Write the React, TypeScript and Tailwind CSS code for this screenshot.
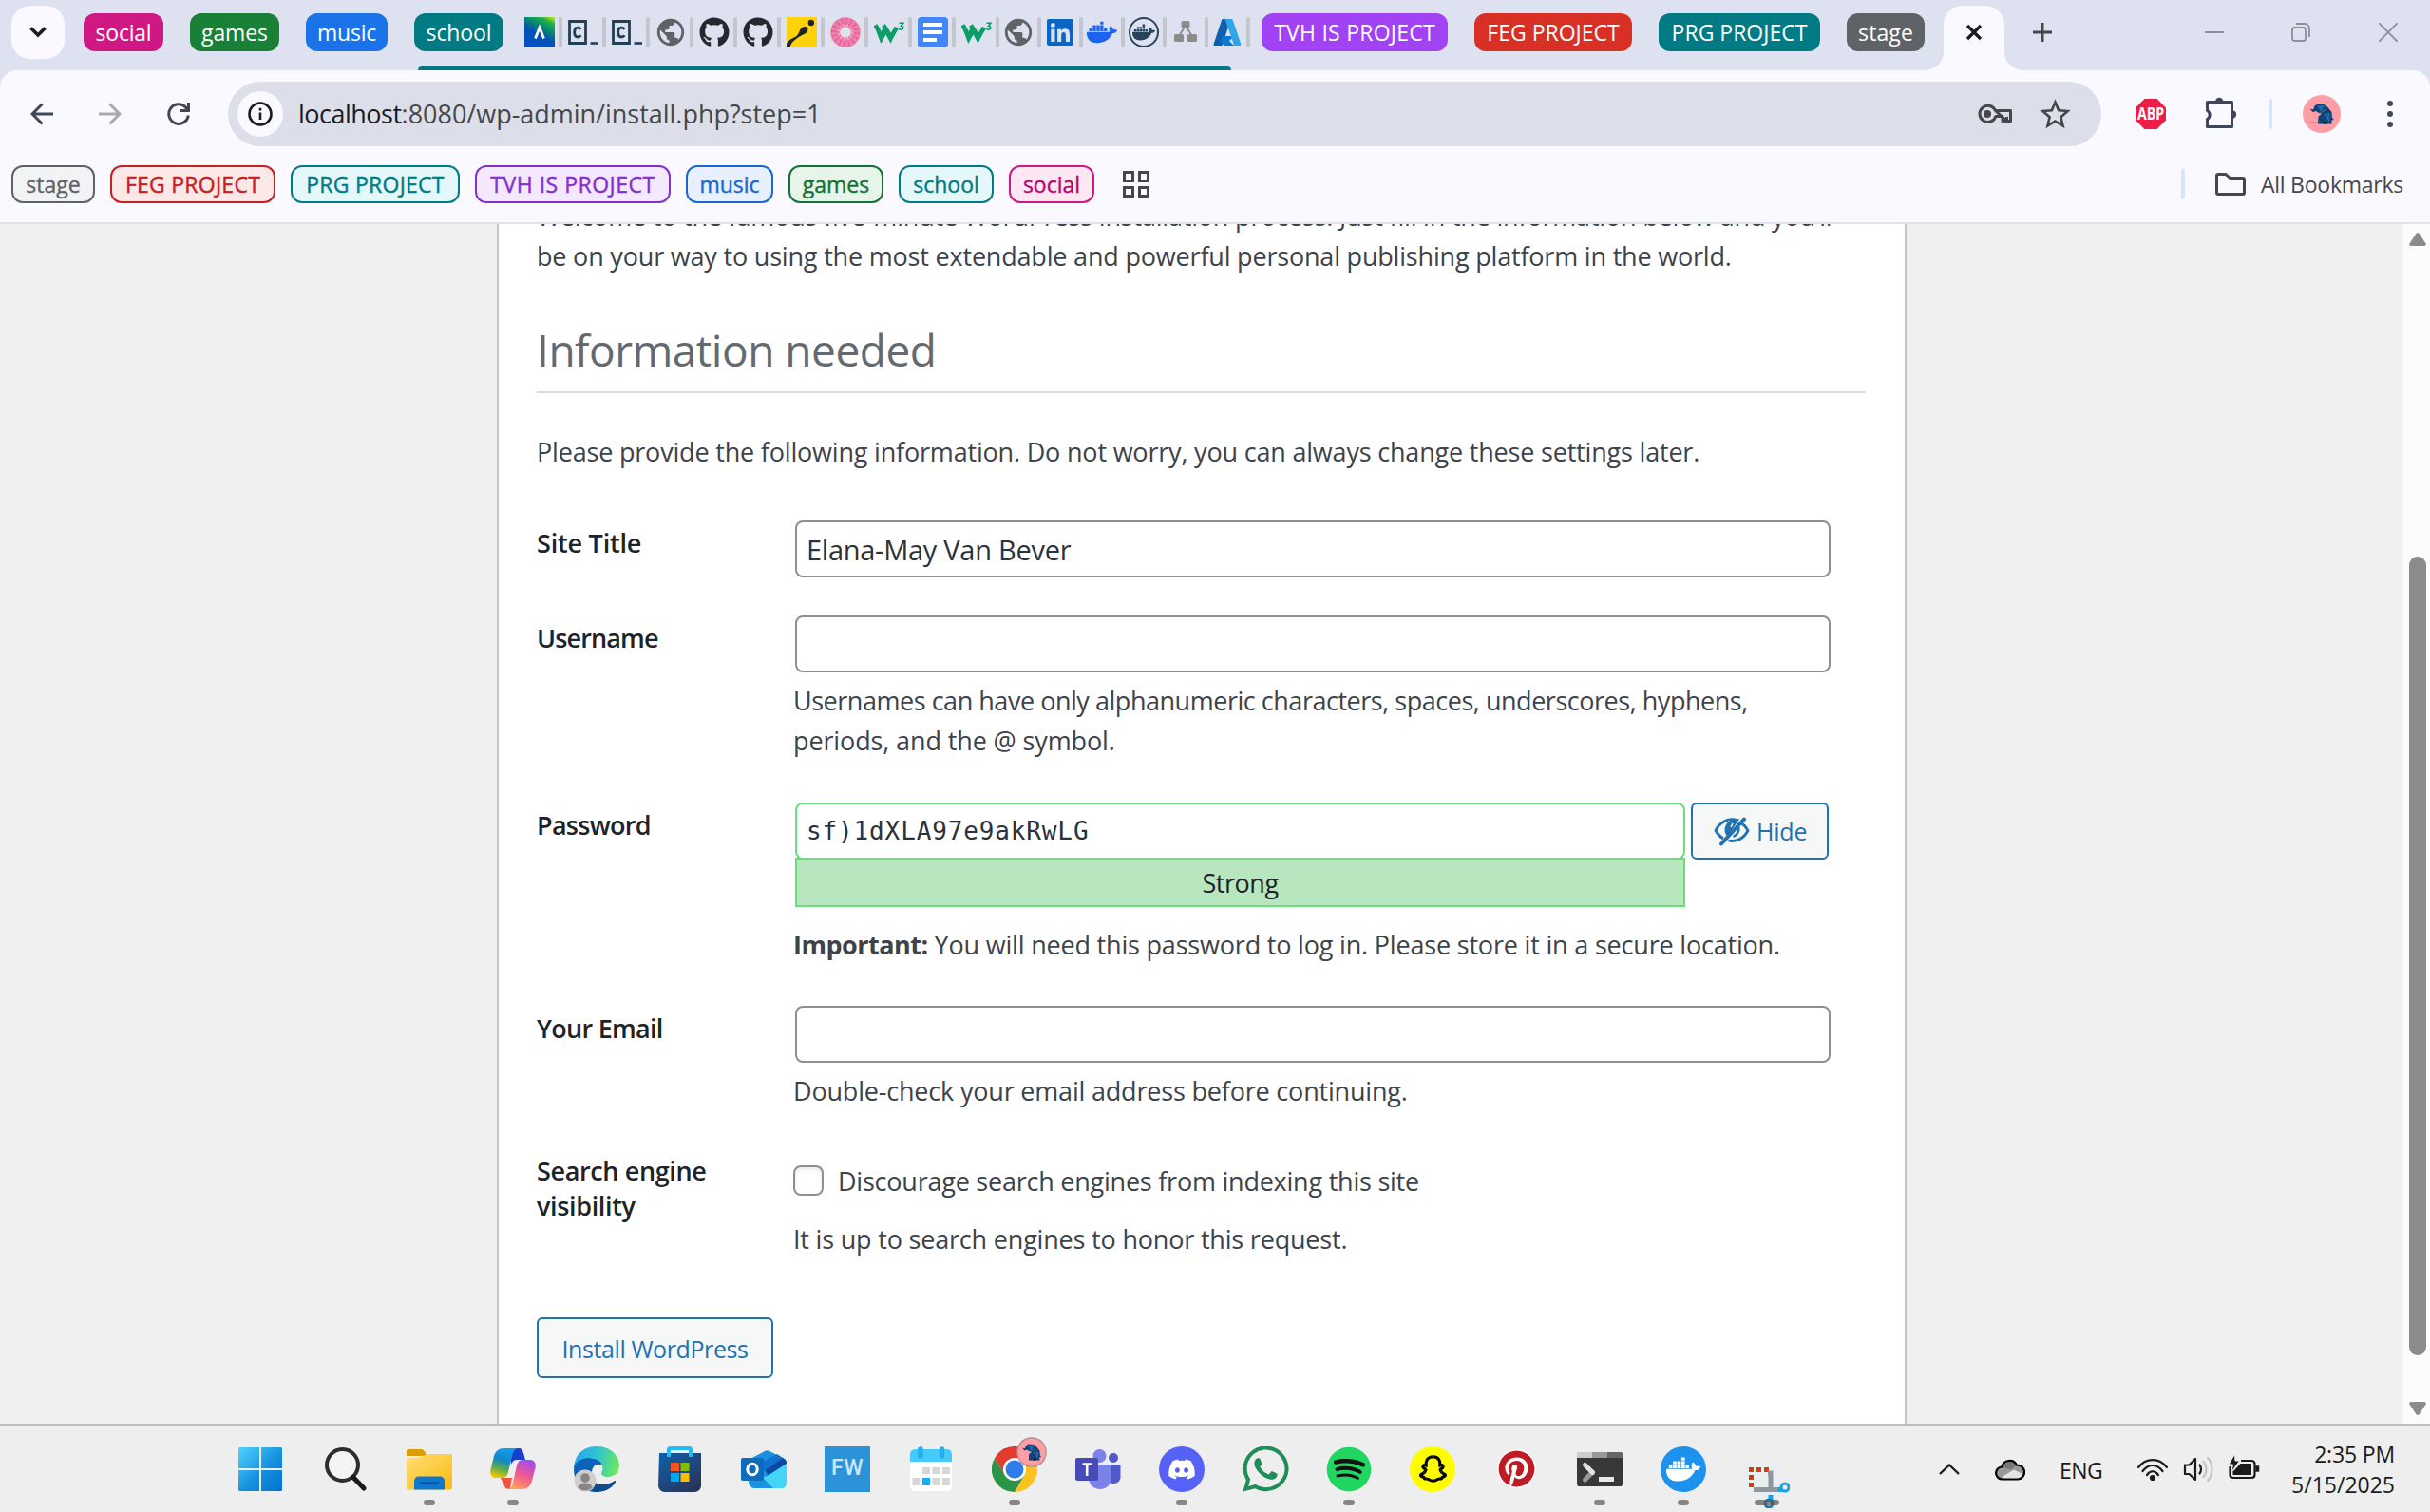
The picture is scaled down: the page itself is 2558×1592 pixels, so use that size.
import type { ReactNode } from 'react';
import { FaDiscord, FaDocker, FaGithub, FaLinkedin, FaPinterest, FaSnapchat, FaSpotify, FaWhatsapp } from 'react-icons/fa6';
import { MdPublic, MdStarBorder } from 'react-icons/md';

/* ---------- tab strip ---------- */

function AcademyIcon() {
  return (
    <svg viewBox="0 0 32 32" className="size-8">
      <defs>
        <linearGradient id="academy" x1="1" y1="0" x2="0.45" y2="1">
          <stop offset="0" stopColor="#d4f000" />
          <stop offset="0.2" stopColor="#22b24c" />
          <stop offset="0.42" stopColor="#078a6c" />
          <stop offset="0.65" stopColor="#0552b5" />
          <stop offset="1" stopColor="#0350c4" />
        </linearGradient>
      </defs>
      <rect width="32" height="32" fill="url(#academy)" />
      <path d="M11.5 22.5 16 11l4.500 11.500" fill="none" stroke="#fff" strokeWidth="2.800" />
    </svg>
  );
}

function CodecademyIcon() {
  return (
    <svg viewBox="0 0 32 32" className="size-8" fill="none" stroke="#204056">
      <path d="M1.500 4.500h17v23h-17z" strokeWidth="2.800" />
      <path d="M13.500 12.800c-1-1.300-2-1.600-3.400-1.600-2.400 0-3.400 1.900-3.400 4.900s1 4.900 3.400 4.900c1.400 0 2.400-.4 3.400-1.600" strokeWidth="2.800" />
      <path d="M23.500 27.500h8.500" strokeWidth="2.600" />
    </svg>
  );
}

function YellowIcon() {
  return (
    <svg viewBox="0 0 32 32" className="size-8">
      <rect width="32" height="32" fill="#ffd20a" />
      <circle cx="25.800" cy="6" r="3.200" fill="#222" />
      <path d="M0 32v-2c0-4 3-6 7-8 4-1.800 5-3 6.500-7 1.300-3.600 4-6 7-4.700 3.200 1.500 2.300 5.500-1 7.200-3.500 1.800-6.500 3-10 6C6 26 4.500 28 3.500 32z" fill="#222" />
    </svg>
  );
}

function PinkRingIcon() {
  return (
    <svg viewBox="0 0 32 32" className="size-8" fill="none">
      <circle cx="16" cy="16" r="10.800" stroke="#ee81ab" strokeWidth="10" />
      <circle cx="16" cy="16" r="11" stroke="#e8669c" strokeWidth="8" strokeDasharray="2 2.300" />
      <circle cx="16" cy="16" r="7.500" stroke="#f4a9c6" strokeWidth="2" strokeDasharray="2 2" />
    </svg>
  );
}

function W3Icon() {
  return (
    <svg viewBox="0 0 32 32" className="size-8" fill="none" stroke="#0a9d68">
      <path d="M1.500 8.200 8 20.500l3.500-8" strokeWidth="4.600" />
      <path d="M10 8.500 18 21l6-10" strokeWidth="4.600" />
      <path d="M3.500 14 7.500 25l5-9 5 9 6-13" strokeWidth="2.500" />
      <path d="M26.500 6.200h4.500l-2.500 3c3 0 3.300 4-.2 4-.9 0-1.500-.3-2-.8" strokeWidth="1.500" />
    </svg>
  );
}

function DocsIcon() {
  return (
    <svg viewBox="0 0 32 32" className="size-8">
      <rect width="32" height="32" rx="4" fill="#4386fa" />
      <path d="M6 8h20M6 16h20M6 24h14" stroke="#fff" strokeWidth="4" />
    </svg>
  );
}

function NetworkIcon() {
  return (
    <svg viewBox="0 0 32 32" className="size-8" fill="#8c8c8c">
      <rect x="11.500" y="4" width="9" height="7" rx="1.500" />
      <rect x="4" y="18" width="10" height="8" rx="1.500" />
      <rect x="18" y="18" width="10" height="8" rx="1.500" />
      <path d="m16 9-7 11M16 9l7 11" stroke="#8c8c8c" strokeWidth="1.800" />
    </svg>
  );
}

function AzureIcon() {
  return (
    <svg viewBox="0 0 32 32" className="size-8">
      <path d="M11.500 2h8.300L10.500 30H2.800c-1 0-1.500-.9-1.200-1.800L10 3.200C10.200 2.500 10.800 2 11.500 2z" fill="#0f5fae" />
      <path d="M10.500 20h13.200L18 25l5 5H13l-4-3z" fill="#0878d0" />
      <path d="M12.500 2h7.700c.8 0 1.400.5 1.600 1.200l8.500 25c.3.900-.2 1.800-1.200 1.800h-7.700c1 0 1.500-.9 1.200-1.800L14 3.200C13.800 2.500 13.200 2 12.500 2z" fill="#32a5e8" />
    </svg>
  );
}

function GlobeIcon() {
  return (
    <div className="flex size-8 items-center justify-center">
      <MdPublic className="size-[34px] shrink-0 text-[#5f6368]" />
    </div>
  );
}

const tabIcons: { icon: ReactNode; tight?: boolean }[] = [
  { icon: <AcademyIcon /> },
  { icon: <CodecademyIcon /> },
  { icon: <CodecademyIcon /> },
  { icon: <GlobeIcon /> },
  { icon: <FaGithub className="size-8 text-[#24292f]" /> },
  { icon: <FaGithub className="size-8 text-[#24292f]" /> },
  { icon: <YellowIcon /> },
  { icon: <PinkRingIcon /> },
  { icon: <W3Icon /> },
  { icon: <DocsIcon /> },
  { icon: <W3Icon />, tight: true },
  { icon: <GlobeIcon />, tight: true },
  { icon: <FaLinkedin className="size-8 text-[#0a66c2]" />, tight: true },
  { icon: <FaDocker className="size-8 text-[#1d63ed]" />, tight: true },
  {
    icon: (
      <div className="flex size-8 items-center justify-center rounded-full border-2 border-[#27445c]">
        <FaDocker className="size-6 text-[#27445c]" />
      </div>
    ),
    tight: true,
  },
  { icon: <NetworkIcon />, tight: true },
  { icon: <AzureIcon />, tight: true },
];

function TabGroup({ label, className }: { label: string; className: string }) {
  return (
    <div className={`flex h-10 shrink-0 items-center justify-center rounded-[12px] text-[23px] whitespace-nowrap text-white ${className}`}>
      <span>{label}</span>
    </div>
  );
}

function TabStrip() {
  return (
    <div className="relative flex h-[74px] shrink-0 bg-[#dee1f0]">
      <div className="flex h-[68px] items-center">
        <div className="ml-3 flex h-14 w-14 items-center justify-center rounded-[20px] bg-[#fbf9ff]">
          <svg viewBox="0 0 20 14" className="h-[14px] w-5" fill="none" stroke="#1b1b1f" strokeWidth="3.600">
            <path d="m2.500 2.500 7.500 7.500 7.500-7.500" />
          </svg>
        </div>
        <TabGroup label="social" className="ml-5 w-[84px] bg-[#d01884] tracking-[-0.22px]" />
        <TabGroup label="games" className="ml-7 w-[94px] bg-[#1a8038] tracking-[-0.1px]" />
        <TabGroup label="music" className="ml-7 w-[86px] bg-[#1a73e8] tracking-[-0.25px]" />
        <TabGroup label="school" className="ml-7 w-[94px] bg-[#007b83] tracking-[-0.1px]" />
        <div className="ml-[22px] flex">
          {tabIcons.map(({ icon, tight }, i) => (
            <div key={i} className={`flex h-8 items-center ${tight ? 'w-11' : 'w-[46px]'}`}>
              {icon}
              <div className="ml-1 h-8 w-1 rounded-sm bg-[#c4c6cf]" />
            </div>
          ))}
        </div>
        <TabGroup label="TVH IS PROJECT" className="ml-2 w-[196px] bg-[#a142f4] tracking-[0.24px]" />
        <TabGroup label="FEG PROJECT" className="ml-7 w-[166px] bg-[#d93025]" />
        <TabGroup label="PRG PROJECT" className="ml-7 w-[170px] bg-[#007b83]" />
        <TabGroup label="stage" className="ml-7 w-[82px] bg-[#5f6368] tracking-[0.1px]" />
      </div>
      <svg viewBox="0 0 108 68" className="mt-1.5 h-[68px] w-[108px] shrink-0">
        <path d="M0 68c12-.5 20-9 20-20V20C20 9 29 0 40 0h24c11 0 20 9 20 20v28c0 11 9 20 20 20z" fill="#f9f9ff" />
        <path d="m45 21 14 14M59 21 45 35" stroke="#1b1b1f" strokeWidth="3.200" />
      </svg>
      <svg viewBox="0 0 20 20" className="mt-6 ml-[6px] size-5 shrink-0" stroke="#47474a" strokeWidth="3">
        <path d="M10 0v20M0 10h20" />
      </svg>
      <div className="flex h-[68px] grow items-center justify-end pr-[34px] text-[#8d8f99]">
        <svg viewBox="0 0 20 20" className="size-5" stroke="currentColor" strokeWidth="2">
          <path d="M0 10h20" />
        </svg>
        <svg viewBox="0 0 20 20" className="ml-[71px] size-5" fill="none" stroke="currentColor" strokeWidth="1.800">
          <rect x="1" y="5" width="14" height="14" rx="2.500" />
          <path d="M5 1h9a5 5 0 0 1 5 5v9" />
        </svg>
        <svg viewBox="0 0 20 20" className="ml-[72px] size-5" stroke="currentColor" strokeWidth="1.800">
          <path d="m0 0 20 20M20 0 0 20" />
        </svg>
      </div>
      <div className="absolute bottom-0 left-[440px] h-1 w-[856px] rounded-t-sm bg-[#007b83]" />
    </div>
  );
}

/* ---------- toolbar ---------- */

function ElephantShape() {
  return (
    <>
      <path d="M7.500 14.500l3.500 1 1.500-4 3-2 7 .5 4 3 4 5 .5 6 2 2-2.500.5v4H16l.5-8 3.500-2.500-4-1.500-2-1.500-3.500 1z" fill="#0f4377" />
      <path d="m15 11 4 7 5-7zM22 20l6 9 1-10z" fill="#1f66a8" />
      <path d="m21 30.500 2.500-3 3 3z" fill="#0a1626" />
      <path d="m17 20 8-5" stroke="#7b8f9e" strokeWidth=".7" />
    </>
  );
}

function Toolbar() {
  return (
    <div className="flex h-[88px] shrink-0 items-center text-[#3f4759]">
      <svg viewBox="0 0 24 24" className="ml-8 size-6" fill="none" stroke="currentColor" strokeWidth="3">
        <path d="M24 12H3M12.500 1.500 2 12l10.500 10.500" />
      </svg>
      <svg viewBox="0 0 24 24" className="ml-12 size-6 text-[#a9a9b0]" fill="none" stroke="currentColor" strokeWidth="3">
        <path d="M0 12h21M11.500 1.500 22 12 11.500 22.500" />
      </svg>
      <svg viewBox="0 0 24 24" className="ml-12 size-6" fill="none" stroke="currentColor" strokeWidth="3">
        <path d="M22.300 13.500a10.300 10.300 0 1 1-3-8.800L22 8" />
        <path d="M22.500 0v8.500H14" />
      </svg>
      <div className="ml-10 flex h-[68px] w-[1972px] items-center rounded-full bg-[#dcdfe9]">
        <div className="ml-2.5 flex size-12 items-center justify-center rounded-full bg-[#f9f9ff]">
          <svg viewBox="0 0 26 26" className="size-[26px]" fill="none" stroke="#1b1b1f" strokeWidth="2.600">
            <circle cx="13" cy="13" r="11.500" />
            <path d="M13 11.500v7.500M13 6.800v2.700" />
          </svg>
        </div>
        <div className="ml-4 text-[27px] text-[#47474a]">
          <span className="tracking-[-0.5px] text-[#1b1b1f]">localhost</span>
          <span className="tracking-[-0.02px]">:8080/wp-admin/install.php?step=1</span>
        </div>
        <svg viewBox="0 0 36 20" className="ml-auto h-5 w-9" fill="none" stroke="#47474a" strokeWidth="3">
          <path d="M18.500 6.500H34.500v11h-4v-4.500m0 4.500h-4.500v-5h-7.200A8.600 8.600 0 1 1 18.500 6.500z" strokeLinejoin="round" />
          <circle cx="10" cy="10" r="2.600" fill="#47474a" />
        </svg>
        <MdStarBorder className="mr-[29px] ml-[26px] size-[39px] text-[#47474a]" />
      </div>
      <svg viewBox="0 0 32 32" className="ml-9 size-8">
        <path d="M9.500 0h13L32 9.500v13L22.500 32h-13L0 22.500v-13z" fill="#ed1e45" />
        <text x="16" y="22" textAnchor="middle" fontFamily="Open Sans" fontSize="17" fontWeight="700" fill="#fff" textLength="28" lengthAdjust="spacingAndGlyphs">ABP</text>
      </svg>
      <svg viewBox="0 0 34 34" className="-mt-1 ml-[41px] size-[34px]" fill="none" stroke="currentColor" strokeWidth="3" strokeLinejoin="round">
        <path d="M2.500 6.500h26v26h-26v-8a5.200 5.200 0 0 0 0-9z" />
        <path d="M11 6a4.200 4.200 0 0 1 8.400 0zM29 15.300a4.200 4.200 0 0 1 0 8.400z" fill="currentColor" stroke="none" />
      </svg>
      <div className="ml-[33px] h-8 w-1 rounded-full bg-[#d6e3ff]" />
      <svg viewBox="0 0 40 40" className="ml-8 size-10">
        <circle cx="20" cy="20" r="20" fill="#ff9fa5" />
        <path d="M7 28.500h9" stroke="#d98c92" strokeWidth="1" />
        <ElephantShape />
      </svg>
      <svg viewBox="0 0 6 28" className="ml-[49px] h-7 w-1.5" fill="currentColor">
        <circle cx="3" cy="3" r="3" />
        <circle cx="3" cy="14" r="3" />
        <circle cx="3" cy="25" r="3" />
      </svg>
    </div>
  );
}

const bookmarks = [
  { label: 'stage', style: 'w-[88px] border-[#5f6368] bg-[#f1f3f4] text-[#5f6368]' },
  { label: 'FEG PROJECT', style: 'w-[174px] border-[#c5221f] bg-[#fce8e6] text-[#c5221f] tracking-[0.25px]' },
  { label: 'PRG PROJECT', style: 'w-[178px] border-[#007b83] bg-[#e4f7fb] text-[#007b83] tracking-[0.25px]' },
  { label: 'TVH IS PROJECT', style: 'w-[206px] border-[#8430ce] bg-[#f3e8fd] text-[#8430ce] tracking-[0.5px]' },
  { label: 'music', style: 'w-[92px] border-[#1967d2] bg-[#e8f0fe] text-[#1967d2]' },
  { label: 'games', style: 'w-[100px] border-[#137333] bg-[#e6f4ea] text-[#137333]' },
  { label: 'school', style: 'w-[100px] border-[#007b83] bg-[#e4f7fb] text-[#007b83]' },
  { label: 'social', style: 'w-[90px] border-[#d01884] bg-[#fde7f3] text-[#b80672]' },
];

function BookmarksBar() {
  return (
    <div className="flex h-[72px] shrink-0 items-center border-b-2 border-[#e1e3ee] pb-[10px] pl-3">
      <div className="flex gap-4">
        {bookmarks.map((b) => (
          <div
            key={b.label}
            className={`flex h-10 items-center justify-center rounded-[12px] border-2 text-[23px] font-medium whitespace-nowrap [-webkit-text-stroke:0.4px] ${b.style}`}
          >
            <span>{b.label}</span>
          </div>
        ))}
      </div>
      <svg viewBox="0 0 28 28" className="ml-[30px] size-7" fill="none" stroke="#47474a" strokeWidth="3">
        <path d="M1.500 1.500h9v9h-9zM17.500 1.500h9v9h-9zM1.500 17.500h9v9h-9zM17.500 17.500h9v9h-9z" />
      </svg>
      <div className="ml-auto h-8 w-1 rounded-full bg-[#d6e3ff]" />
      <svg viewBox="0 0 32 24" className="ml-8 h-6 w-8" fill="none" stroke="#47474a" strokeWidth="3" strokeLinejoin="round">
        <path d="M3 1.500h8l4.500 4H29c.9 0 1.500.6 1.500 1.500v14c0 .9-.6 1.500-1.500 1.500H3c-.9 0-1.500-.6-1.500-1.500V3c0-.9.600-1.500 1.500-1.500z" />
      </svg>
      <span className="mr-[28px] ml-4 text-[23px] tracking-[-0.25px] text-[#47474a]">All Bookmarks</span>
    </div>
  );
}

/* ---------- page ---------- */

function Row({ label, labelStyle = '', className, children }: { label: ReactNode; labelStyle?: string; className: string; children: ReactNode }) {
  return (
    <div className={`flex ${className}`}>
      <div className={`w-[270px] shrink-0 pt-[5px] text-[27px] leading-[37px] font-semibold text-[#1d2327] ${labelStyle}`}>{label}</div>
      <div className="w-[1100px]">{children}</div>
    </div>
  );
}

function Field({ children }: { children?: ReactNode }) {
  return (
    <div className="ml-[2px] flex h-[60px] w-[1090px] items-center rounded-lg border-2 border-[#8c8f94] pl-2.5 text-[29px] tracking-[-0.27px] text-[#2c3338]">{children}</div>
  );
}

function HiddenEye() {
  return (
    <svg viewBox="0 0 38 32" className="h-8 w-[38px]" fill="none" stroke="#2271b1" strokeWidth="2.800">
      <path d="M25 4.500C15 1.500 6 7 2 15.500c2 3.500 4.500 6.500 8 8.500" />
      <path d="M29.500 8c3 2 5 4.500 6.500 7.500-4 8-12 12.500-20.500 10.500" />
      <path d="M27 3.500C20 1.500 12 7 11.500 14c-.2 3.500 1 6 3 7.500z" fill="#2271b1" stroke="none" />
      <path d="M26.500 12c.3 4.500-2 8-6 10" strokeWidth="2.400" />
      <path d="M32 3.500 8 29.500" strokeWidth="4" strokeLinecap="round" />
      <path d="m20 8-2 4" stroke="#f6f7f7" strokeWidth="1.600" />
    </svg>
  );
}

function InstallForm() {
  return (
    <div className="h-full w-[1484px] border-x-2 border-[#c3c4c7] bg-white pl-[40px] text-[27px] leading-[42px] tracking-[-0.19px] text-[#3c434a]">
      <p className="mt-[-29px] w-[1380px] whitespace-nowrap">
        Welcome to the famous five-minute WordPress installation process! Just fill in the information below and you’ll
        <br />
        be on your way to using the most extendable and powerful personal publishing platform in the world.
      </p>
      <h1 className="mt-[49px] h-[74px] w-[1399px] border-b-2 border-[#dcdcde] text-[46px] leading-[56px] tracking-[-0.47px] text-[#646970]">Information needed</h1>
      <p className="mt-[41px]">Please provide the following information. Do not worry, you can always change these settings later.</p>
      <div className="mt-[51px]">
        <Row label="Site Title" labelStyle="tracking-[-0.2px]" className="h-[100px]">
          <Field>
            <span className="mt-px">Elana-May Van Bever</span>
          </Field>
        </Row>
        <Row label="Username" labelStyle="tracking-[-0.85px]" className="h-[197px]">
          <Field />
          <p className="mt-[9px]">
            <span className="tracking-[-0.47px]">Usernames can have only alphanumeric characters, spaces, underscores, hyphens,</span>
            <br />
            <span className="tracking-[-0.12px]">periods, and the @ symbol.</span>
          </p>
        </Row>
        <Row label="Password" labelStyle="tracking-[-0.72px]" className="h-[214px]">
          <div className="ml-[2px] flex">
            <div className="w-[937px]">
              <div className="flex h-[60px] items-center rounded-lg border-2 border-[#68de7c] pl-2.5 font-['DejaVu_Sans_Mono',monospace] text-[26px] tracking-[0.87px] text-[#2c3338]">
                sf)1dXLA97e9akRwLG
              </div>
              <div className="-mt-0.5 flex h-[52px] items-center justify-center border-2 border-[#68de7c] bg-[#b8e6bf] pt-0.5 tracking-[-0.45px] text-[#1d2327]">Strong</div>
            </div>
            <div className="ml-1.5 flex h-[60px] w-[145px] items-center rounded-md border-2 border-[#2271b1] bg-[#f6f7f7] pl-[22px] text-[25px] text-[#2271b1]">
              <HiddenEye />
              <span className="ml-[7px]">Hide</span>
            </div>
          </div>
          <p className="mt-[19px]">
            <b className="tracking-[-0.5px]">Important:</b> You will need this password to log in. Please store it in a secure location.
          </p>
        </Row>
        <Row label="Your Email" labelStyle="tracking-[-0.72px]" className="h-[150px]">
          <Field />
          <p className="mt-[9px]">Double-check your email address before continuing.</p>
        </Row>
        <Row label={<>Search engine<br />visibility</>} labelStyle="tracking-[-0.36px]" className="h-[178px]">
          <div className="mt-[13px] flex h-[42px] items-center">
            <div className="size-8 rounded-lg border-2 border-[#8c8f94] shadow-[inset_0_2px_4px_rgba(0,0,0,0.1)]" />
            <span className="mt-0.5 ml-[15px] tracking-[-0.23px]">Discourage search engines from indexing this site</span>
          </div>
          <p className="mt-5">It is up to search engines to honor this request.</p>
        </Row>
        <div className="flex h-16 w-[249px] items-center justify-center rounded-md border-2 border-[#2271b1] bg-[#f6f7f7] pt-px text-[25px] tracking-[-0.4px] text-[#2271b1]">Install WordPress</div>
      </div>
    </div>
  );
}

function Scrollbar() {
  return (
    <div className="flex h-full w-7 flex-col bg-[#fcfcfc] pt-[9px] pl-1.5">
      <svg viewBox="0 0 18 14" className="h-[14px] w-[18px]" fill="#8b8b8b">
        <path d="M7.500.8c.8-1 2.200-1 3 0l7 10.500c.8 1.200 0 2.700-1.500 2.700H2c-1.500 0-2.300-1.500-1.500-2.700z" />
      </svg>
      <div className="mt-[327px] h-[841px] w-[18px] rounded-full bg-[#8b8b8b]" />
      <svg viewBox="0 0 18 14" className="mt-[49px] h-[14px] w-[18px] rotate-180" fill="#8b8b8b">
        <path d="M7.500.8c.8-1 2.200-1 3 0l7 10.500c.8 1.200 0 2.700-1.500 2.700H2c-1.500 0-2.300-1.500-1.500-2.700z" />
      </svg>
    </div>
  );
}

/* ---------- taskbar ---------- */

function StartIcon() {
  return (
    <svg viewBox="0 0 46 46" className="mr-[4px] size-[46px]">
      <defs>
        <linearGradient id="start" gradientUnits="userSpaceOnUse" x1="0" y1="0" x2="46" y2="46">
          <stop offset="0" stopColor="#50d5ff" />
          <stop offset="0.550" stopColor="#1690df" />
          <stop offset="1" stopColor="#0072d0" />
        </linearGradient>
      </defs>
      <path d="M1 0h21v22H0V1zM24 0h21l1 1v21H24zM0 24h22v22H1l-1-1zM24 24h22v21l-1 1H24z" fill="url(#start)" />
    </svg>
  );
}

function SearchIcon() {
  return (
    <svg viewBox="0 0 46 46" className="size-[46px]" fill="none">
      <circle cx="19.500" cy="18.500" r="16.500" fill="#f4f4f4" stroke="#2d2d2d" strokeWidth="4" />
      <path d="M31 31.500 42 43" stroke="#1b1b1b" strokeWidth="5" strokeLinecap="round" />
    </svg>
  );
}

function FolderIcon() {
  return (
    <svg viewBox="0 0 48 48" className="size-12">
      <defs>
        <linearGradient id="folder" x1="0" y1="0" x2="1" y2="1">
          <stop offset="0" stopColor="#ffdd72" />
          <stop offset="1" stopColor="#fbbc14" />
        </linearGradient>
      </defs>
      <path d="M0 5c0-1.200.8-2 2-2h13c2.500 0 3.500 1.500 5 4l2 3H0z" fill="#dd9d00" />
      <path d="M0 12c5 0 13 .5 17-1.500 2-1 3-2.500 5-2.500h25l1 1v35l-1.500 1.500H1L0 44z" fill="url(#folder)" />
      <path d="M8 45.500V37c0-3.500 2-5.500 5-5.500h22c3 0 5 2 5 5.500v8.500z" fill="#0f77cc" />
      <path d="M15 38.500h18" stroke="#0a4f96" strokeWidth="2.200" strokeLinecap="round" />
    </svg>
  );
}

function CopilotIcon() {
  return (
    <svg viewBox="0 0 48 48" className="size-12">
      <defs>
        <linearGradient id="cop-a" x1="0.600" y1="0" x2="0.300" y2="1">
          <stop offset="0" stopColor="#0fa0f5" />
          <stop offset="0.400" stopColor="#1286c8" />
          <stop offset="0.700" stopColor="#5aab4f" />
          <stop offset="1" stopColor="#f5c800" />
        </linearGradient>
        <linearGradient id="cop-b" x1="0.700" y1="0" x2="0.300" y2="1">
          <stop offset="0" stopColor="#a04cf0" />
          <stop offset="0.500" stopColor="#f0588e" />
          <stop offset="1" stopColor="#ffa060" />
        </linearGradient>
      </defs>
      <path d="M22 2h8c3 0 4 2 5 5l2 7h-9c-3 0-5 2-6 5z" fill="#1740cc" />
      <path d="M11 33h12c-1 4-1 9-3 12-4 0-5-3-6-6z" fill="#f0553a" />
      <path d="M15 2h15c-4 0-6 3-7 8l-4 17c-1 4-3 6-7 6H6c-5 0-6.500-4-5.500-9l3.500-14c1.500-5 5-8 11-8z" fill="url(#cop-a)" />
      <path d="M34 14h7c6 0 7.500 4 6.500 9l-3.500 13c-1.500 6-5 9-11 9H18c4-1 5-3 6-7l4-18c1-4 3-6 6-6z" fill="url(#cop-b)" />
    </svg>
  );
}

function EdgeIcon() {
  return (
    <svg viewBox="0 0 48 48" className="size-12">
      <defs>
        <linearGradient id="edge-a" x1="0" y1="0.300" x2="1" y2="0.500">
          <stop offset="0" stopColor="#2aa4f0" />
          <stop offset="0.500" stopColor="#2fc4d2" />
          <stop offset="1" stopColor="#6be95a" />
        </linearGradient>
      </defs>
      <path d="M0 24C0 10 9 0 24 0s24 10 24 20c0 7-5 12-12 12-5 0-7-2-7-4 0-1.500 1.500-2 1.500-5S27 12 17 12C9 12 2 17 0 24z" fill="url(#edge-a)" />
      <path d="M0 24c0-7 7-12 16-12 8 0 13 4 14 8-5-3-11 0-11 8s6 14 14 14c-3 4-6 6-10 6C10 48 0 38 0 24z" fill="#0a63b8" />
      <path d="M16 22c-2 10 4 18 14 18 6 0 10-2 13-4 1 0 1.500.5 1 1.500C40 44 33 48 24 48 14 46 10 32 16 22z" fill="#114a8b" />
      <ellipse cx="12" cy="36" rx="11.500" ry="11.500" fill="#cfcfcf" />
      <circle cx="12" cy="33" r="4.800" fill="#8a8683" />
      <path d="M4.500 43.500c1-4 4-5 7.500-5s6.500 1 7.500 5a11 11 0 0 1-15 0z" fill="#8a8683" />
    </svg>
  );
}

function StoreIcon() {
  return (
    <svg viewBox="0 0 48 48" className="size-12">
      <defs>
        <linearGradient id="store" x1="0" y1="0" x2="0.800" y2="1">
          <stop offset="0" stopColor="#0c62ad" />
          <stop offset="1" stopColor="#2a3358" />
        </linearGradient>
      </defs>
      <path d="M2 7h44v34c0 4-3 7-7 7H8c-4 0-7-3-7-7z" fill="url(#store)" />
      <path d="M12 11V3.500C12 2.500 12.500 2 13.500 2h20c1 0 1.500.5 1.500 1.500V11" fill="none" stroke="#23bdf5" strokeWidth="4" />
      <path d="M14 17h9v9h-9z" fill="#f35325" />
      <path d="M24.500 17h9v9h-9z" fill="#81bc06" />
      <path d="M14 28h9v9h-9z" fill="#05a6f0" />
      <path d="M24.500 28h9v9h-9z" fill="#ffba08" />
    </svg>
  );
}

function OutlookIcon() {
  return (
    <svg viewBox="0 0 48 48" className="size-12">
      <path d="m8 14 17-9c2-1 3-1 5 0l14 7c3 2 4 3 4 6L26 34 8 26z" fill="#1b8fe0" />
      <path d="m23 20 21-8c3 1.500 4 3 4 6L29 32z" fill="#0a4aa0" />
      <path d="m19 18 19-10 6 4-21 15z" fill="#1173cf" />
      <path d="M8 36V24l18 8 22-14v20c0 4-2 6-6 6H15c-5 0-7-4-7-8z" fill="#43d4f8" />
      <path d="M8 34h16l10 10H15c-5 0-7-4-7-8z" fill="#1b93e0" />
      <rect y="12" width="24" height="24" rx="2" fill="#0f6cbd" />
      <ellipse cx="12" cy="24" rx="5.200" ry="5.800" fill="none" stroke="#fff" strokeWidth="3" />
    </svg>
  );
}

function CalendarIcon() {
  return (
    <svg viewBox="0 0 48 48" className="size-12">
      <path d="M2 14h44v27c0 4-2 6-6 6H8c-4 0-6-2-6-6z" fill="#fff" />
      <path d="M2 16V9c0-4 2-6 6-6h32c4 0 6 2 6 6v7z" fill="#45cbfb" />
      <path d="M13 3v7M35.500 3v7" stroke="#27aee8" strokeWidth="5.500" strokeLinecap="round" />
      <path d="M15 22h8v7h-8zM25.500 22h8v7h-8zM36 22h8v7h-8zM4.500 33h8v8h-8zM25.500 33h8v8h-8zM36 33h8v8h-8z" fill="#d6d6d6" />
      <path d="M15 33h8v8h-8z" fill="#0fb2f8" />
    </svg>
  );
}

function ChromeIcon() {
  return (
    <div className="relative size-12">
      <svg viewBox="0 0 48 48" className="size-12">
        <path d="M3.200 12A24 24 0 0 1 44.800 12H24z" fill="#e33b2e" />
        <path d="M3.200 12 13.600 30 24 24V12z" fill="#e33b2e" />
        <path d="M44.800 12A24 24 0 0 1 24 48l10.400-18L24 12z" fill="#fcc31e" />
        <path d="M24 48A24 24 0 0 1 3.200 12l10.400 18L24 36l10.400-6z" fill="#2a9447" />
        <circle cx="24" cy="24" r="12" fill="#fff" />
        <circle cx="24" cy="24" r="9.500" fill="#2f7de9" />
      </svg>
      <svg viewBox="0 0 40 40" className="absolute -top-[10px] left-[26px] size-8">
        <circle cx="20" cy="20" r="19" fill="#ff9fa5" stroke="#a58e92" strokeWidth="1.500" />
        <ElephantShape />
      </svg>
    </div>
  );
}

function TeamsIcon() {
  return (
    <svg viewBox="0 0 48 48" className="size-12">
      <circle cx="40" cy="12" r="5" fill="#5059c9" />
      <path d="M33 19h13c1 0 1.500.5 1.500 1.500V32c0 4-3 7-7 7s-7.500-2-7.500-7z" fill="#5059c9" />
      <circle cx="25.500" cy="10" r="7" fill="#7b83eb" />
      <path d="M14 19h22c1 0 2 1 2 2v12c0 7-5 12-12 12s-12-5-12-12z" fill="#7b83eb" />
      <rect x="0" y="12" width="24" height="24" rx="2" fill="#464bb8" />
      <path d="M7.500 18.500h9.500M12.200 18.500V31" stroke="#fff" strokeWidth="2.600" />
    </svg>
  );
}

function TerminalIcon() {
  return (
    <svg viewBox="0 0 48 48" className="size-12">
      <path d="M0 12h48v28l-1 2H1l-1-2z" fill="#383838" />
      <path d="M0 12V7l1-1h15v6z" fill="#ccc" />
      <path d="M16 6h16v6H16z" fill="#999" />
      <path d="M32 6h15l1 1v5H32z" fill="#666" />
      <path d="m8.500 35 8-8" stroke="#999" strokeWidth="5" strokeLinecap="round" />
      <path d="m8.500 19.500 8 8" stroke="#e2e2e2" strokeWidth="5" strokeLinecap="round" />
      <path d="M23 34.500h16" stroke="#e8e8e8" strokeWidth="5" />
    </svg>
  );
}

function SnipIcon() {
  return (
    <svg viewBox="0 0 48 48" className="mt-[34px] size-12" fill="none">
      <rect width="35" height="35" rx="4" fill="#e9eef1" />
      <path d="M5 5h5v5H5zM13 5h5v5h-5zM21 5h5v5h-5zM5 13h5v5H5zM5 21h5v5H5z" fill="#da3b01" />
      <path d="M25 11h3v20" stroke="#8f979e" strokeWidth="5" />
      <path d="M10 28.500h26" stroke="#8f979e" strokeWidth="5" />
      <path d="M36 28.500h4M28 34v6" stroke="#1ba1e2" strokeWidth="5" />
      <circle cx="43" cy="26" r="4" stroke="#1ba1e2" strokeWidth="3" />
      <circle cx="26" cy="43" r="4" stroke="#1b7fb5" strokeWidth="3" />
    </svg>
  );
}

const apps: { icon: ReactNode; mark?: 'running' | 'active' }[] = [
  { icon: <StartIcon /> },
  { icon: <SearchIcon /> },
  { icon: <FolderIcon />, mark: 'running' },
  { icon: <CopilotIcon />, mark: 'running' },
  { icon: <EdgeIcon /> },
  { icon: <StoreIcon /> },
  { icon: <OutlookIcon /> },
  { icon: <div className="flex size-12 items-center justify-center bg-[#2d93d8] font-['Roboto'] text-[23px] font-medium tracking-[0.5px] text-[#cbe6f8]">FW</div> },
  { icon: <CalendarIcon /> },
  { icon: <ChromeIcon />, mark: 'running' },
  { icon: <TeamsIcon /> },
  {
    icon: (
      <div className="flex size-12 items-center justify-center rounded-full bg-[#5662f6]">
        <FaDiscord className="size-[30px] text-white" />
      </div>
    ),
    mark: 'running',
  },
  { icon: <FaWhatsapp className="size-[55px] shrink-0 text-[#1f8d57]" /> },
  {
    icon: (
      <div className="flex size-12 items-center justify-center rounded-full bg-[radial-gradient(circle,#111_60%,transparent_61%)]">
        <FaSpotify className="size-12 text-[#1fd760]" />
      </div>
    ),
    mark: 'running',
  },
  {
    icon: (
      <div className="flex size-12 items-center justify-center rounded-full bg-[#fffc00]">
        <FaSnapchat className="size-[29px] overflow-visible fill-white stroke-black [stroke-width:28px]" />
      </div>
    ),
  },
  { icon: <div className="rounded-full bg-white p-px"><FaPinterest className="size-[39px] text-[#bd1c24]" /></div> },
  { icon: <TerminalIcon />, mark: 'running' },
  {
    icon: (
      <div className="flex size-12 items-center justify-center rounded-full bg-[#1d91ee]">
        <FaDocker className="size-9 text-white" />
      </div>
    ),
    mark: 'running',
  },
  { icon: <SnipIcon />, mark: 'active' },
];

function Taskbar() {
  return (
    <div className="flex h-[93px] shrink-0 border-t-2 border-[#bdbdbd] bg-[#eee] text-[#1b1b1b]">
      <div className="flex pl-[232px]">
        {apps.map(({ icon, mark }, i) => (
          <div key={i} className="relative flex h-[91px] w-[88px] flex-col items-center">
            <div className="flex h-[92px] items-center justify-center">{icon}</div>
            {mark === 'running' && <div className="absolute top-[78px] h-1.5 w-3 rounded-full bg-[#868686]" />}
            {mark === 'active' && <div className="absolute top-[78px] h-1.5 w-[26px] rounded-full bg-[#555]/70" />}
          </div>
        ))}
      </div>
      <div className="ml-auto flex h-[91px] items-center pr-[37px] text-[23px]">
        <svg viewBox="0 0 22 12" className="h-3 w-[22px]" fill="none" stroke="#1b1b1b" strokeWidth="2.400">
          <path d="m1 11 10-9.500L21 11" />
        </svg>
        <svg viewBox="0 0 32 24" className="ml-[37px] h-6 w-8">
          <path d="M8 22.500a6.500 6.500 0 0 1-.8-13A8.500 8.500 0 0 1 23 7.500a7.500 7.500 0 0 1 1 15z" fill="#999" />
          <path d="M7 9.500A8.500 8.500 0 0 1 23 7.500l-6 5z" fill="#777" />
          <path d="m9 19 11-6.500L31 18c-1 3-3.500 4.500-7 4.500H8z" fill="#e4e4e4" />
          <path d="M8 22.500a6.500 6.500 0 0 1-.8-13A8.500 8.500 0 0 1 23 7.500a7.500 7.500 0 0 1 1 15z" fill="none" stroke="#000" strokeWidth="2.200" />
        </svg>
        <span className="mt-1 ml-9 w-[46px] tracking-[-0.6px]">ENG</span>
        <svg viewBox="0 0 34 26" className="ml-[35px] h-[26px] w-[34px]" fill="none" stroke="#1b1b1b" strokeWidth="2.200" strokeLinecap="round">
          <path d="M2 11C10 .5 24 .5 32 11M6.500 15C12.500 7 21.500 7 27.500 15M11 19c3.500-5 8.500-5 12 0" />
          <circle cx="17" cy="22" r="2" fill="#1b1b1b" />
        </svg>
        <svg viewBox="0 0 34 28" className="ml-[15px] h-7 w-[34px]" fill="none" strokeWidth="2.200" strokeLinecap="round" strokeLinejoin="round">
          <path d="M2 9.500h4.500L13 3v22l-6.500-6H2zM17.500 9.500c2 2.500 2 6.500 0 9" stroke="#1b1b1b" />
          <path d="M21.500 6c4 4.500 4 11.500 0 16M26 2c6 6.500 6 17.500 0 24" stroke="#c4c4c4" />
        </svg>
        <svg viewBox="0 0 34 28" className="-mt-1.5 ml-[13px] h-7 w-[34px]">
          <path d="M14 8h11c2 0 3.500 1.500 3.500 3.500v11c0 2-1.500 3.500-3.500 3.500H6c-2 0-3.500-1.500-3.500-3.500V14" fill="none" stroke="#1b1b1b" strokeWidth="2.200" />
          <path d="M13.500 11H25v12H5.500v-3.500z" fill="#1b1b1b" />
          <path d="M30 14h2.500v5H30z" fill="#1b1b1b" stroke="#1b1b1b" strokeWidth="1.500" />
          <path d="M7.500 1 1 12h4.500L4 20 12.500 8H8z" fill="#1b1b1b" stroke="#eee" strokeWidth="1" />
        </svg>
        <div className="mt-px ml-[30px] flex w-[112px] flex-col items-end leading-8 whitespace-nowrap">
          <span className="tracking-[-0.16px]">2:35 PM</span>
          <span>5/15/2025</span>
        </div>
      </div>
    </div>
  );
}

export default function App() {
  return (
    <div className="flex h-[1592px] w-[2558px] flex-col overflow-hidden bg-[#f0f0f1] font-['Open_Sans',sans-serif]">
      <TabStrip />
      <div className="shrink-0 bg-[#dee1f0]">
        <div className="flex flex-col rounded-t-[18px] bg-[#f9f9ff] pt-[2px]">
          <Toolbar />
          <BookmarksBar />
        </div>
      </div>
      <div className="flex min-h-0 grow overflow-hidden bg-[#f0f0f0] pl-[523px]">
        <InstallForm />
        <div className="ml-auto h-full">
          <Scrollbar />
        </div>
      </div>
      <Taskbar />
    </div>
  );
}
